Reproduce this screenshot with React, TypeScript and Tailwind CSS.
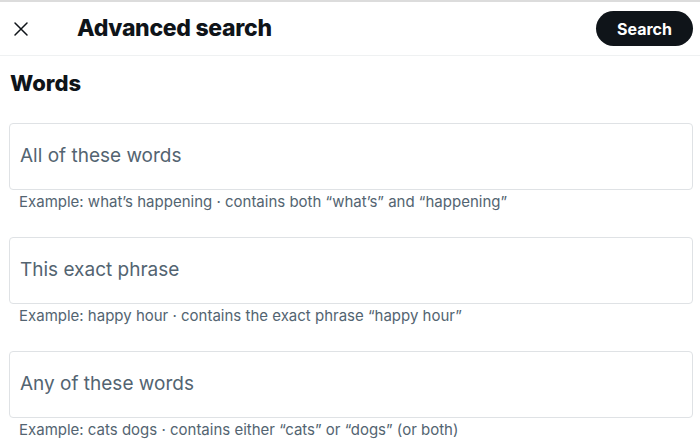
const fields = [
  {
    label: "All of these words",
    hint: "Example: what’s happening · contains both “what’s” and “happening”",
  },
  {
    label: "This exact phrase",
    hint: "Example: happy hour · contains the exact phrase “happy hour”",
  },
  {
    label: "Any of these words",
    hint: "Example: cats dogs · contains either “cats” or “dogs” (or both)",
  },
];

export default function App() {
  return (
    <div
      className="w-[700px] h-[445px] overflow-hidden bg-white border-t-2 border-[#dcdcdc] text-[#0f1419]"
      style={{ fontFamily: "Inter, 'Noto Sans', sans-serif" }}
    >
      <div className="flex items-center h-[54px] border-b border-[#eff1f2] pl-[12px] pr-[7px]">
        <svg width="18" height="18" viewBox="0 0 24 24" className="shrink-0">
          <path d="M4 4 L20 20 M20 4 L4 20" stroke="#0f1419" strokeWidth="2" strokeLinecap="round" />
        </svg>
        <h1 className="ml-[47px] text-[23px] font-extrabold tracking-[-0.3px]">Advanced search</h1>
        <button className="ml-auto h-[35px] w-[97px] rounded-full bg-[#0f1419] text-white text-[16px] font-bold">
          Search
        </button>
      </div>

      <h2 className="px-[10px] pt-[14px] text-[22px] font-extrabold leading-[26px]">Words</h2>

      <div className="flex flex-col gap-[24px] px-[9px] pr-[7px] pt-[27px]">
        {fields.map((f) => (
          <div key={f.label}>
            <div className="h-[67px] flex items-center rounded-[4px] border border-[#dfe2e5] px-[10px]">
              <span className="text-[19px] text-[#536471]">{f.label}</span>
            </div>
            <p className="pl-[10px] pt-[1px] text-[15px] leading-[22px] text-[#536471]">{f.hint}</p>
          </div>
        ))}
      </div>
    </div>
  );
}
